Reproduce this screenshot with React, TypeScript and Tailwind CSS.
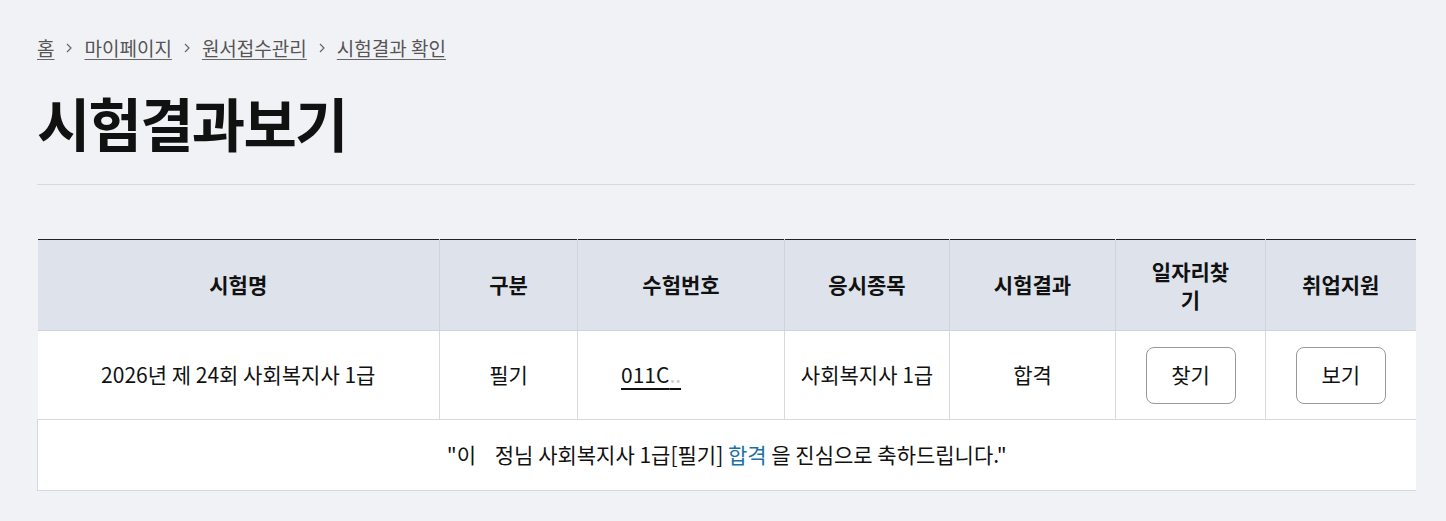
import React from "react";

const FONT = { fontFamily: '"Noto Sans CJK KR", "Noto Sans", sans-serif' };

const crumbs = ["홈", "마이페이지", "원서접수관리", "시험결과 확인"];

function Chevron() {
  return (
    <svg width="12" height="12" viewBox="0 0 12 12" className="mx-[9px] text-[#666]">
      <path d="M4 2l4 4-4 4" fill="none" stroke="currentColor" strokeWidth="1.2" />
    </svg>
  );
}

const cols = [402, 138, 207, 165, 166, 150, 150];

export default function App() {
  return (
    <div className="min-h-[521px] bg-[#f1f2f6] pl-[37px] pr-[31px] pt-[35px] text-[#111]" style={FONT}>
      {/* breadcrumb */}
      <nav className="flex items-center text-[19px] leading-[26px] text-[#555]">
        {crumbs.map((c, i) => (
          <React.Fragment key={c}>
            {i > 0 && <Chevron />}
            <a className="underline underline-offset-[3px] decoration-[#666]">{c}</a>
          </React.Fragment>
        ))}
      </nav>

      <h1 className="mt-[23px] text-[58px] font-bold leading-[76px] tracking-[-0.03em] text-[#111]">
        시험결과보기
      </h1>
      <div className="mt-[24px] h-px bg-[#d6d9df]" />

      <table className="mt-[54px] w-full table-fixed border-collapse border-t border-[#222] text-[21px]">
        <colgroup>
          {cols.map((w, i) => (
            <col key={i} style={{ width: w }} />
          ))}
        </colgroup>
        <thead>
          <tr className="h-[91px] bg-[#dee3eb] font-bold">
            <th className="border-r border-b border-[#cfd3da]">시험명</th>
            <th className="border-r border-b border-[#cfd3da]">구분</th>
            <th className="border-r border-b border-[#cfd3da]">수험번호</th>
            <th className="border-r border-b border-[#cfd3da]">응시종목</th>
            <th className="border-r border-b border-[#cfd3da]">시험결과</th>
            <th className="border-r border-b border-[#cfd3da] leading-[28px]">
              <span className="inline-block max-w-[90px]">일자리찾기</span>
            </th>
            <th className="border-b border-[#cfd3da]">취업지원</th>
          </tr>
        </thead>
        <tbody className="bg-white text-center">
          <tr className="h-[89px]">
            <td className="border-r border-b border-[#d6d9df]">2026년 제 24회 사회복지사 1급</td>
            <td className="border-r border-b border-[#d6d9df]">필기</td>
            {/* 수험번호 일부 가림 */}
            <td className="border-r border-b border-[#d6d9df] pl-[43px] text-left">
              <span className="underline decoration-2 underline-offset-[5px]">
                011C<span className="text-[#ccc]">..</span>
              </span>
            </td>
            <td className="border-r border-b border-[#d6d9df]">사회복지사 1급</td>
            <td className="border-r border-b border-[#d6d9df]">합격</td>
            <td className="border-r border-b border-[#d6d9df]">
              <button className="h-[57px] w-[90px] rounded-[8px] border border-[#999] bg-white text-[21px]">
                찾기
              </button>
            </td>
            <td className="border-b border-[#d6d9df]">
              <button className="h-[57px] w-[90px] rounded-[8px] border border-[#999] bg-white text-[21px]">
                보기
              </button>
            </td>
          </tr>
          <tr className="h-[71px]">
            <td colSpan={7} className="border-l border-b border-[#d6d9df]">
              "이&nbsp;&nbsp;&nbsp;&nbsp;정님 사회복지사 1급[필기] <span className="text-[#1b6fa8]">합격</span> 을 진심으로
              축하드립니다."
            </td>
          </tr>
        </tbody>
      </table>
    </div>
  );
}
